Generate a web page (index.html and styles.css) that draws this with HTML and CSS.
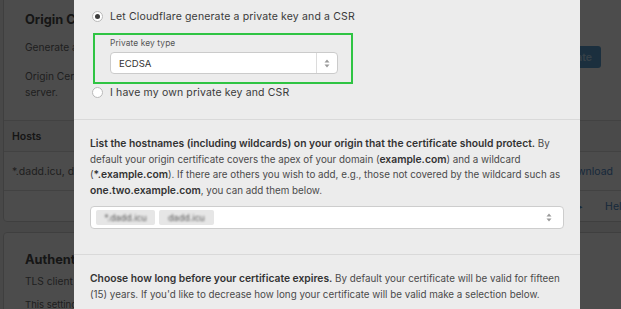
FILE: index.html
```html
<!DOCTYPE html>
<html lang="en">
<head>
    <meta charset="UTF-8">
    <title>SSL/TLS - Origin Server</title>
    <link rel="stylesheet" href="styles.css">
</head>
<body>
    <div class="page">
        <section class="card">
            <div class="card-head">
                <div class="card-text">
                    <h2>Origin Certificates</h2>
                    <p>Generate a free TLS certificate signed by Cloudflare to install on your origin server.</p>
                    <p class="wrap">Origin Certificates are only valid for encryption between Cloudflare and your origin server.</p>
                </div>
                <button class="btn">Create Certificate</button>
            </div>
            <div class="table">
                <div class="row row-head"><span>Hosts</span></div>
                <div class="row"><span>*.dadd.icu, dadd.icu</span><span class="link">Download</span></div>
                <div class="row row-foot"><span class="link">Tutorial ▸</span><span class="link">Help</span></div>
            </div>
        </section>

        <section class="card">
            <h2>Authenticated Origin Pulls</h2>
            <p>TLS client certificate presented for authentication on origin pull.</p>
            <p class="note">This setting only applies to certificates uploaded or managed by Cloudflare.</p>
        </section>
    </div>

    <div class="overlay"></div>

    <div class="modal">
        <div class="modal-section key-section">
            <label class="option">
                <input type="radio" name="key" class="radio" checked>
                <span>Let Cloudflare generate a private key and a CSR</span>
            </label>
            <div class="key-type">
                <div class="field-label">Private key type</div>
                <div class="select">
                    <span class="select-value">ECDSA</span>
                    <span class="select-arrows">
                        <svg width="6" height="9" viewBox="0 0 6 9"><path d="M3 0.5 L5.5 3.5 H0.5 Z M3 8.5 L5.5 5.5 H0.5 Z" fill="#9a9a9a"/></svg>
                    </span>
                </div>
            </div>
            <label class="option">
                <input type="radio" name="key" class="radio">
                <span>I have my own private key and CSR</span>
            </label>
        </div>

        <div class="modal-section hosts-section">
            <p class="text"><b>List the hostnames (including wildcards) on your origin that the certificate should protect.</b> By default your origin certificate covers the apex of your domain (<b>example.com</b>) and a wildcard (<b>*.example.com</b>). If there are others you wish to add, e.g., those not covered by the wildcard such as <b>one.two.example.com</b>, you can add them below.</p>
            <div class="tag-input">
                <span class="tag"><span class="tag-text">*.dadd.icu</span></span>
                <span class="tag"><span class="tag-text">dadd.icu</span></span>
                <span class="select-arrows">
                    <svg width="6" height="9" viewBox="0 0 6 9"><path d="M3 0.5 L5.5 3.5 H0.5 Z M3 8.5 L5.5 5.5 H0.5 Z" fill="#9a9a9a"/></svg>
                </span>
            </div>
        </div>

        <div class="modal-section validity-section">
            <p class="text"><b>Choose how long before your certificate expires.</b> By default your certificate will be valid for fifteen (15) years. If you'd like to decrease how long your certificate will be valid make a selection below.</p>
        </div>
    </div>
</body>
</html>
```

FILE: styles.css
```css
html, body {
    margin: 0;
    padding: 0;
    height: 100%;
    overflow: hidden;
}

body {
    background: #f2f2f2;
    font-family: Inter, "Liberation Sans", sans-serif;
    color: #555;
    position: relative;
}

/* page behind the dialog */
.page {
    padding: 0 0 0 3px;
    margin-top: -8px;
    width: 626px;
}

.card {
    background: #fff;
    border: 1px solid #d4d4d4;
    border-radius: 4px;
    margin-bottom: 10px;
}

.card h2 {
    margin: 0;
    font-size: 12.8px;
    line-height: 16px;
    font-weight: 700;
    color: #4a4a4a;
}

.card p {
    margin: 0;
    font-size: 10.2px;
    line-height: 16px;
    color: #6a6a6a;
}

.card-head {
    display: flex;
    justify-content: space-between;
    align-items: flex-start;
    padding: 19px 27px 20px 21px;
}

.card-text h2 {
    margin-bottom: 11px;
}

.card-text p + p {
    margin-top: 13px;
}

.wrap {
    max-width: 420px;
}

.btn {
    margin-top: 34px;
    height: 22px;
    padding: 0 9px;
    border: 0;
    border-radius: 3px;
    background: #5a9fcf;
    color: #b4d6ee;
    font-family: inherit;
    font-size: 10.5px;
    font-weight: 600;
}

.table {
    border-top: 1px solid #ddd;
}

.row {
    display: flex;
    justify-content: space-between;
    padding: 0 15px 0 8px;
    height: 38px;
    align-items: center;
    border-bottom: 1px solid #ddd;
    font-size: 10.5px;
    color: #6a6a6a;
}

.row-head {
    height: 30px;
    background: #f8f8f8;
    font-weight: 600;
    color: #4a4a4a;
}

.row-foot {
    height: 30px;
    border-bottom: 0;
    justify-content: flex-end;
    gap: 22px;
    padding-right: 0;
}

.link {
    color: #4f89c6;
}

.card + .card {
    padding: 19px 21px;
}

.card + .card h2 {
    margin-bottom: 5px;
}

.note {
    margin-top: 8px !important;
    font-size: 9.5px !important;
}

.overlay {
    position: absolute;
    inset: 0;
    background: rgba(0, 0, 0, 0.7);
}

/* dialog */
.modal {
    position: absolute;
    top: 0;
    left: 74px;
    width: 506px;
    bottom: 0;
    background: #ececec;
    color: #3a3a3a;
    font-size: 10.5px;
}

.modal-section {
    padding: 0 16px;
    border-bottom: 1px solid #d9d9d9;
}

.key-section {
    padding-top: 9px;
    padding-bottom: 19px;
}

.option {
    display: flex;
    align-items: center;
    height: 15px;
    gap: 7px;
    margin-left: 2px;
    letter-spacing: 0.15px;
}

.radio {
    appearance: none;
    margin: 0;
    width: 11px;
    height: 11px;
    border: 1px solid #b9b9b9;
    border-radius: 50%;
    background: #fff;
    display: grid;
    place-content: center;
}

.radio:checked::before {
    content: "";
    width: 5px;
    height: 5px;
    border-radius: 50%;
    background: #3d3d3d;
}

.key-type {
    width: 228px;
    margin: 9px 0 1px 3px;
    padding: 1px 13px 8px 15px;
    border: 2px solid #2fc443;
}

.field-label {
    font-size: 8.4px;
    color: #555;
    line-height: 14px;
    margin-bottom: 2px;
    letter-spacing: 0.1px;
}

.select {
    display: flex;
    height: 20px;
    background: #fff;
    border: 1px solid #cbcbcb;
    border-radius: 4px;
}

.select-value {
    flex: 1;
    display: flex;
    align-items: center;
    padding-left: 8px;
    font-size: 9.6px;
    color: #333;
}

.select-arrows {
    width: 20px;
    display: flex;
    align-items: center;
    justify-content: center;
}

.select .select-arrows {
    border-left: 1px solid #dcdcdc;
}

.hosts-section {
    padding-top: 16px;
    padding-bottom: 25px;
}

.text {
    margin: 0;
    font-size: 9.8px;
    line-height: 15.5px;
    color: #4a4a4a;
}

.text b {
    font-size: 10.3px;
    font-weight: 600;
    color: #333;
}

.tag-input {
    display: flex;
    align-items: center;
    gap: 4px;
    margin-top: 8px;
    height: 21px;
    padding: 0 4px 0 5px;
    background: #fff;
    border: 1px solid #cdcdcd;
    border-radius: 4px;
}

.tag {
    display: flex;
    align-items: center;
    justify-content: center;
    height: 15px;
    width: 59px;
    background: #e6e6e6;
    border-radius: 2px;
}

.tag + .tag {
    width: 55px;
}

.tag-text {
    font-size: 9px;
    color: #555;
    filter: blur(1px);
}

.tag-input .select-arrows {
    margin-left: auto;
}

.validity-section {
    padding-top: 16px;
    border-bottom: 0;
}
```
